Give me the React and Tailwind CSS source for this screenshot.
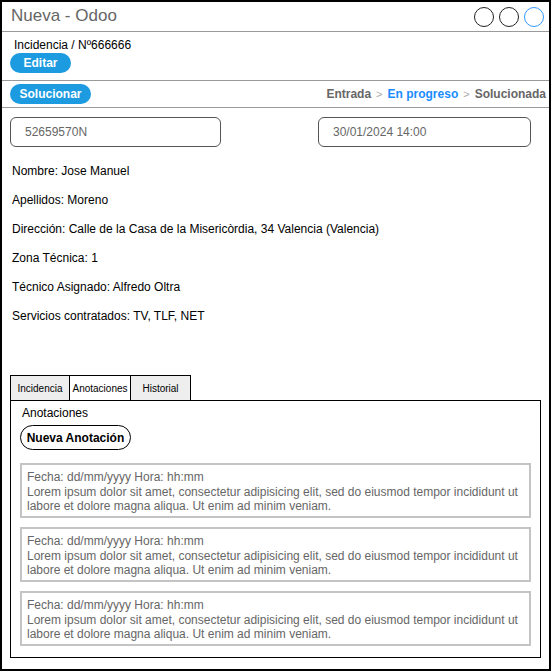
import React from 'react';

const font = { fontFamily: '"Liberation Sans", Arial, sans-serif' };

const datos = [
  'Nombre: Jose Manuel',
  'Apellidos: Moreno',
  'Dirección: Calle de la Casa de la Misericòrdia, 34 Valencia (Valencia)',
  'Zona Técnica: 1',
  'Técnico Asignado: Alfredo Oltra',
  'Servicios contratados: TV, TLF, NET',
];

const lorem =
  'Lorem ipsum dolor sit amet, consectetur adipisicing elit, sed do eiusmod tempor incididunt ut labore et dolore magna aliqua. Ut enim ad minim veniam.';

function Anotacion() {
  return (
    <div className="h-[55px] border-2 border-[#c4c4c4] px-[5px] pt-[5px] text-[12px] leading-[14.5px] text-[#666]">
      <p>Fecha: dd/mm/yyyy Hora: hh:mm</p>
      <p>{lorem}</p>
    </div>
  );
}

export default function App() {
  return (
    <div style={font} className="w-[551px] h-[671px] border-2 border-black bg-white flex flex-col text-black">
      {/* barra de titulo */}
      <div className="h-[30px] border-b border-[#9a9a9a] flex items-center justify-between pl-[9px] pr-[5px] shrink-0">
        <span className="text-[17px] text-[#666] -mt-[2px]">Nueva - Odoo</span>
        <div className="flex gap-[5px]">
          <span className="w-[20px] h-[20px] rounded-full border border-[#222]" />
          <span className="w-[20px] h-[20px] rounded-full border border-[#222]" />
          <span className="w-[20px] h-[20px] rounded-full border border-[#3399ff]" />
        </div>
      </div>

      <div className="h-[49px] border-b border-[#9a9a9a] px-[8px] pt-[6px] shrink-0">
        <p className="text-[12px] leading-[14px] pl-[4px]">Incidencia / Nº666666</p>
        <button className="mt-[1px] w-[61px] h-[20px] rounded-full bg-[#1d9be0] text-white font-bold text-[12px] flex items-center justify-center">
          Editar
        </button>
      </div>

      <div className="h-[27px] border-b border-[#9a9a9a] flex items-center justify-between pl-[8px] pr-[3px] shrink-0">
        <button className="w-[81px] h-[20px] rounded-full bg-[#1d9be0] text-white font-bold text-[12px] flex items-center justify-center">
          Solucionar
        </button>
        <div className="text-[12px] font-bold text-[#666] flex items-center gap-[5px]">
          <span>Entrada</span>
          <span className="text-[#aaa] font-normal text-[11px]">&gt;</span>
          <span className="text-[#1a8cff]">En progreso</span>
          <span className="text-[#aaa] font-normal text-[11px]">&gt;</span>
          <span>Solucionada</span>
        </div>
      </div>

      <div className="flex justify-between pl-[8px] pr-[18px] pt-[9px] shrink-0">
        <div className="w-[211px] h-[30px] border border-[#555] rounded-[6px] flex items-center pl-[14px] text-[12px] text-[#666]">
          52659570N
        </div>
        <div className="w-[213px] h-[30px] border border-[#555] rounded-[6px] flex items-center pl-[14px] text-[12px] text-[#666]">
          30/01/2024 14:00
        </div>
      </div>

      <div className="pl-[10px] pt-[17px] flex flex-col gap-[15px] text-[12px] leading-[14px] shrink-0">
        {datos.map((d) => (
          <p key={d}>{d}</p>
        ))}
      </div>

      <div className="mt-[52px] pl-[8px] pr-[8px] flex flex-col">
        <div className="flex h-[25px] text-[10px]">
          <div className="w-[60px] border border-black border-b-0 bg-[#eee] flex items-center justify-center">Incidencia</div>
          <div className="w-[61px] border border-black border-b-0 border-l-0 bg-white flex items-center justify-center">Anotaciones</div>
          <div className="w-[60px] border border-black border-b-0 border-l-0 bg-[#eee] flex items-center justify-center">Historial</div>
        </div>
        <div className="h-[258px] border border-black px-[9px] pt-[5px]">
          <p className="text-[12px] leading-[14px] pl-[2px]">Anotaciones</p>
          <button className="mt-[5px] w-[111px] h-[25px] rounded-full border border-black bg-white font-bold text-[12px] flex items-center justify-center">
            Nueva Anotación
          </button>
          <div className="mt-[13px] flex flex-col gap-[9px]">
            <Anotacion />
            <Anotacion />
            <Anotacion />
          </div>
        </div>
      </div>
    </div>
  );
}
